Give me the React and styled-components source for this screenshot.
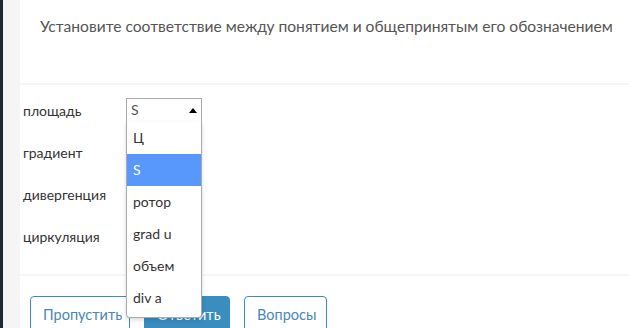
import React, { useState } from 'react';
import styled, { createGlobalStyle } from 'styled-components';

const GlobalStyle = createGlobalStyle`
  html, body {
    margin: 0;
    padding: 0;
    background: #fff;
    font-family: Lato, "Open Sans", sans-serif;
  }
`;

const Page = styled.div`
  display: flex;
  height: 328px;
  overflow: hidden;
`;

const DarkEdge = styled.div`
  width: 3px;
  background: #1e2a31;
  flex-shrink: 0;
`;

const Gutter = styled.div`
  width: 17px;
  background: #f5f5f5;
  flex-shrink: 0;
`;

const Main = styled.div`
  flex: 1;
  display: flex;
  flex-direction: column;
  background: #fff;
`;

const Header = styled.div`
  flex-shrink: 0;
  height: 85px;
  box-sizing: border-box;
  padding: 17px 0 0 20px;
  border-bottom: 2px solid #f5f5f5;
  color: #555;
  font-size: 15.6px;
`;

const Body = styled.div`
  flex-shrink: 0;
  height: 191px;
  box-sizing: border-box;
  padding: 4px 0 0 3px;
  border-bottom: 2px solid #f5f5f5;
  display: flex;
  flex-direction: column;
  position: relative;
  z-index: 2;
`;

const Row = styled.div`
  display: flex;
  align-items: center;
  height: 42px;
`;

const Label = styled.div`
  width: 103px;
  font-size: 14px;
  color: #333;
`;

const SelectWrap = styled.div`
  position: relative;
  width: 76px;
  z-index: 10;
`;

const SelectBox = styled.div`
  height: 25px;
  box-sizing: border-box;
  border: 1px solid #aaa;
  display: flex;
  align-items: center;
  justify-content: space-between;
  padding: 0 4px 2px 4px;
  font-size: 14px;
  color: #555;
  background: #fff;
`;

const Arrow = styled.span`
  width: 0;
  height: 0;
  border-left: 4px solid transparent;
  border-right: 4px solid transparent;
  border-bottom: 5px solid #000;
  margin-top: 3px;
`;

const Menu = styled.ul`
  position: absolute;
  top: 24px;
  left: 0;
  width: 76px;
  box-sizing: border-box;
  margin: 0;
  padding: 0 0 3px;
  list-style: none;
  background: #fff;
  border: 1px solid #aaa;
  border-top: none;
  border-radius: 0 0 4px 4px;
  box-shadow: 0 2px 4px rgba(0, 0, 0, 0.15);
`;

const Option = styled.li`
  height: 32px;
  display: flex;
  align-items: center;
  padding: 0 6px;
  font-size: 14px;
  color: ${({ active }) => (active ? '#fff' : '#333')};
  background: ${({ active }) => (active ? '#5897fb' : '#fff')};
`;

const Footer = styled.div`
  flex-shrink: 0;
  display: flex;
  gap: 14px;
  padding: 20px 0 0 10px;
  position: relative;
  z-index: 1;
`;

const Button = styled.button`
  height: 40px;
  box-sizing: border-box;
  padding: 0 12px 4px;
  font-family: inherit;
  font-size: 14.5px;
  border-radius: 4px;
  border: 1px solid #3a8dbf;
  background: ${({ primary }) => (primary ? '#3a8dbf' : '#fff')};
  color: ${({ primary }) => (primary ? '#fff' : '#4a86b4')};
  width: ${({ w }) => w}px;
`;

const rows = ['площадь', 'градиент', 'дивергенция', 'циркуляция'];
const options = ['Ц', 'S', 'ротор', 'grad u', 'объем', 'div a'];

const App = () => {
  const [value] = useState('S');

  return (
    <>
      <GlobalStyle />
      <Page>
        <DarkEdge />
        <Gutter />
        <Main>
          <Header>Установите соответствие между понятием и общепринятым его обозначением</Header>
          <Body>
            {rows.map((r, i) => (
              <Row key={r}>
                <Label>{r}</Label>
                {i === 0 && (
                  <SelectWrap>
                    <SelectBox>
                      {value}
                      <Arrow />
                    </SelectBox>
                    <Menu>
                      {options.map(o => (
                        <Option key={o} active={o === value}>{o}</Option>
                      ))}
                    </Menu>
                  </SelectWrap>
                )}
              </Row>
            ))}
          </Body>
          <Footer>
            <Button w={100}>Пропустить</Button>
            <Button primary w={86}>Ответить</Button>
            <Button w={83}>Вопросы</Button>
          </Footer>
        </Main>
      </Page>
    </>
  );
};

export default App;
